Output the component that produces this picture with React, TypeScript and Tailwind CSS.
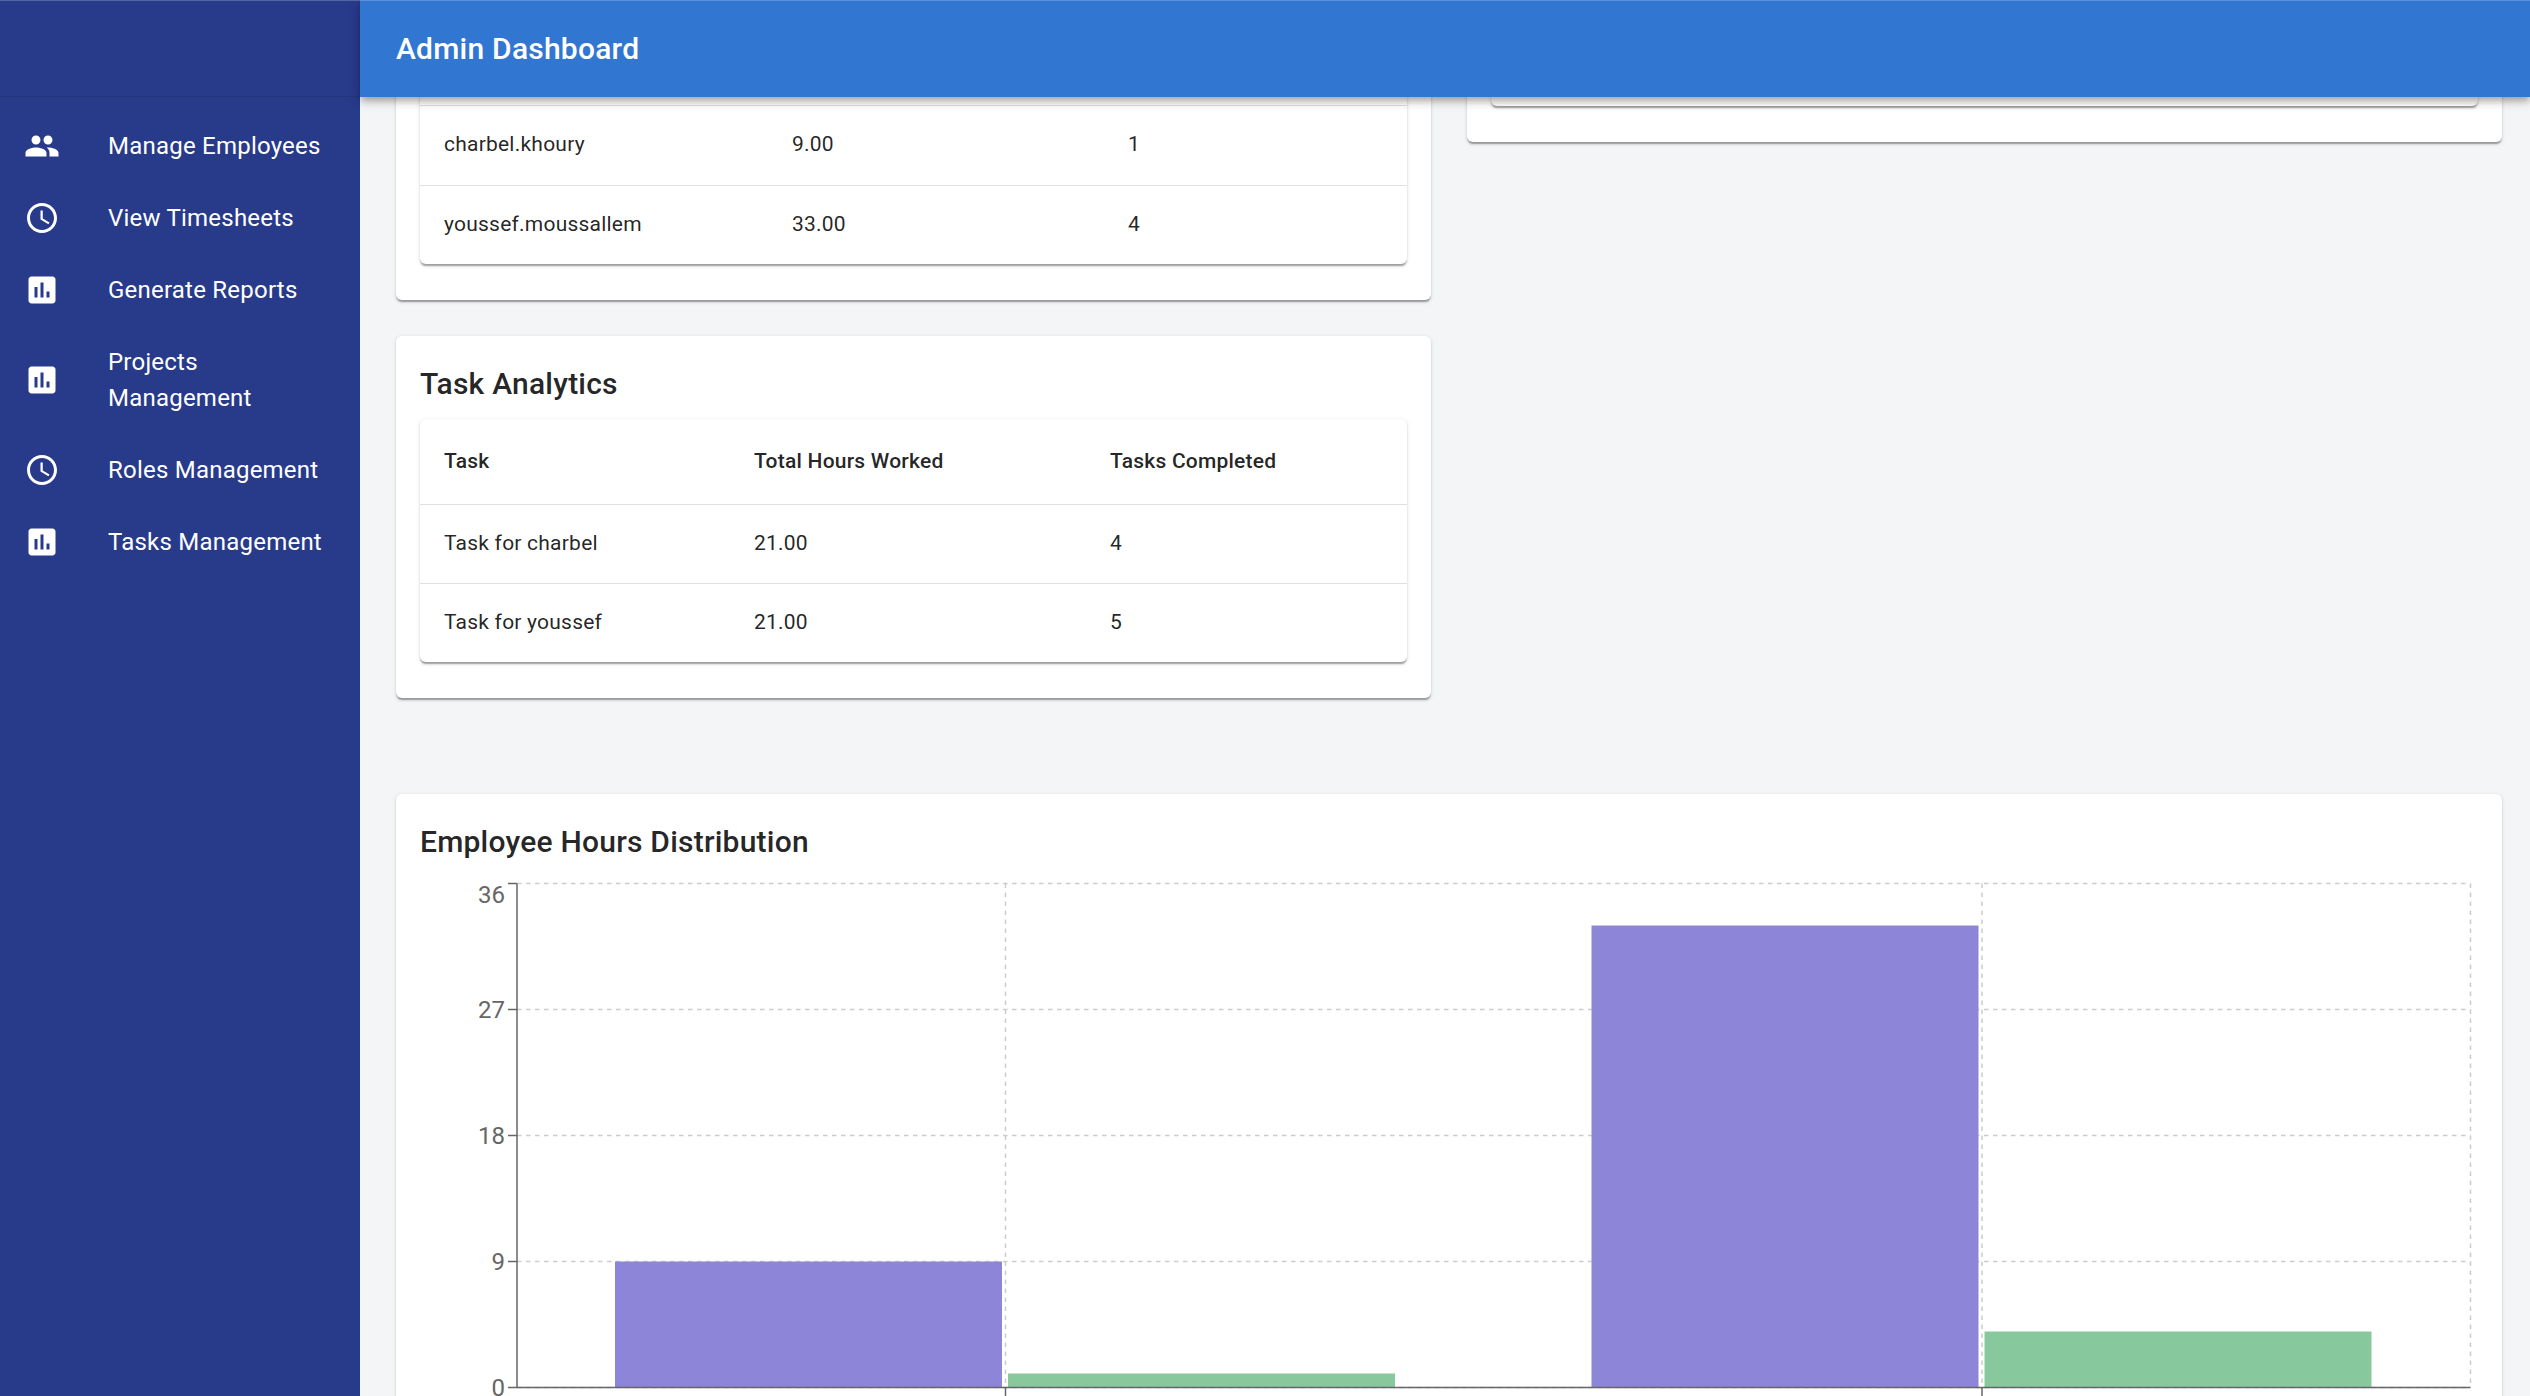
const PEOPLE =
  "M16 11c1.66 0 2.99-1.34 2.99-3S17.66 5 16 5c-1.66 0-3 1.34-3 3s1.34 3 3 3zm-8 0c1.66 0 2.99-1.34 2.99-3S9.66 5 8 5C6.34 5 5 6.34 5 8s1.34 3 3 3zm0 2c-2.33 0-7 1.17-7 3.5V19h14v-2.5c0-2.33-4.67-3.5-7-3.5zm8 0c-.29 0-.62.02-.97.05 1.16.84 1.97 1.97 1.97 3.45V19h6v-2.5c0-2.33-4.67-3.5-7-3.5z";
const CLOCK =
  "M11.99 2C6.47 2 2 6.48 2 12s4.47 10 9.99 10C17.52 22 22 17.52 22 12S17.52 2 11.99 2zM12 20c-4.42 0-8-3.58-8-8s3.58-8 8-8 8 3.58 8 8-3.58 8-8 8zm.5-13H11v6l5.25 3.15.75-1.23-4.5-2.67z";
const CHART =
  "M19 3H5c-1.1 0-2 .9-2 2v14c0 1.1.9 2 2 2h14c1.1 0 2-.9 2-2V5c0-1.1-.9-2-2-2zM9 17H7v-7h2v7zm4 0h-2V7h2v10zm4 0h-2v-4h2v4z";

const navItems = [
  { label: "Manage Employees", icon: PEOPLE },
  { label: "View Timesheets", icon: CLOCK },
  { label: "Generate Reports", icon: CHART },
  { label: "Projects Management", icon: CHART },
  { label: "Roles Management", icon: CLOCK },
  { label: "Tasks Management", icon: CHART },
];

const elevation =
  "shadow-[0_3px_1.5px_-1.5px_rgba(0,0,0,0.2),0_1.5px_1.5px_rgba(0,0,0,0.14),0_1.5px_4.5px_rgba(0,0,0,0.12)]";

const Row = ({ cells, last }: { cells: string[]; last?: boolean }) => (
  <tr className={last ? "h-[79px]" : "h-[79px] border-b border-[#e0e0e0]"}>
    {cells.map((c, i) => (
      <td key={i} className="px-[24px] pb-[2px] text-[21px] leading-[30px] tracking-[0.01071em] text-black/[0.87]">
        {c}
      </td>
    ))}
  </tr>
);

const Chart = () => {
  const yTicks = [
    { label: "36", y: 883.5, dy: 19 },
    { label: "27", y: 1009.5, dy: 8 },
    { label: "18", y: 1135.5, dy: 8 },
    { label: "9", y: 1261.5, dy: 8 },
    { label: "0", y: 1387.5, dy: 8 },
  ];
  const bars = [
    { x: 615, y: 1261.5, fill: "#8c85d8" },
    { x: 1008, y: 1373.5, fill: "#87c99d" },
    { x: 1591.5, y: 925.5, fill: "#8c85d8" },
    { x: 1984.5, y: 1331.5, fill: "#87c99d" },
  ];
  return (
    <svg viewBox="420 866 2058 540" className="block w-[2058px] h-[540px]">
      {yTicks.map((t) => (
        <line key={t.label} x1="517" x2="2470.5" y1={t.y} y2={t.y} stroke="#ccc" strokeWidth="1.5" strokeDasharray="4.5 4.5" />
      ))}
      {[1005.5, 1982, 2470.5].map((x) => (
        <line key={x} x1={x} x2={x} y1="883.5" y2="1387.5" stroke="#ccc" strokeWidth="1.5" strokeDasharray="4.5 4.5" />
      ))}
      {bars.map((b) => (
        <rect key={b.x} x={b.x} y={b.y} width="387" height={1387.5 - b.y} fill={b.fill} />
      ))}
      <line x1="517" x2="517" y1="883.5" y2="1387.5" stroke="#666" strokeWidth="1.5" />
      <line x1="517" x2="2470.5" y1="1387.5" y2="1387.5" stroke="#666" strokeWidth="1.5" />
      {yTicks.map((t) => (
        <g key={t.label}>
          <line x1="508" x2="517" y1={t.y} y2={t.y} stroke="#666" strokeWidth="1.5" />
          <text x="505" y={t.y + t.dy} textAnchor="end" fontSize="24" fill="#666">
            {t.label}
          </text>
        </g>
      ))}
      {[1005.5, 1982].map((x) => (
        <line key={x} x1={x} x2={x} y1="1387.5" y2="1397" stroke="#666" strokeWidth="1.5" />
      ))}
    </svg>
  );
};

export default function App() {
  return (
    <div className="flex h-screen w-screen overflow-hidden font-[Roboto,sans-serif]">
      <aside className="w-[360px] shrink-0 border-t border-[#5468a8] bg-[#283a8a] text-white">
        <div className="h-[96px] border-b border-black/10" />
        <nav className="pt-[13px]">
          {navItems.map((item) => (
            <div key={item.label} className="flex items-center px-[24px] py-[18px]">
              <div className="w-[84px] shrink-0">
                <svg viewBox="0 0 24 24" className="block w-[36px] h-[36px] fill-white">
                  <path d={item.icon} />
                </svg>
              </div>
              <span className="text-[24px] leading-[36px] tracking-[0.00938em]">{item.label}</span>
            </div>
          ))}
        </nav>
      </aside>

      <div className="flex min-w-0 flex-1 flex-col">
        <header className="relative z-10 flex h-[97px] shrink-0 items-center border-t border-[#5e92dc] bg-[#3176d1] px-[36px] text-white shadow-[0_3px_6px_-1.5px_rgba(0,0,0,0.2),0_6px_7.5px_rgba(0,0,0,0.14),0_1.5px_15px_rgba(0,0,0,0.12)]">
          <h1 className="text-[30px] leading-[48px] font-medium tracking-[0.0075em]">Admin Dashboard</h1>
        </header>

        <main className="flex-1 overflow-hidden bg-[#f4f5f7]">
          <div className="-mt-[40px] w-[2106px] ml-[36px]">
            <div className="grid grid-cols-2 items-start gap-[36px]">
              <div className="flex flex-col gap-[36px]">
                <section className={`rounded-[6px] bg-white px-[24px] pt-[24px] pb-[36px] ${elevation}`}>
                  <div className={`rounded-[6px] bg-white ${elevation}`}>
                    <div className="h-[25px] border-b border-[#e0e0e0]" />
                    <table className="w-full table-fixed">
                      <colgroup>
                        <col className="w-[348px]" />
                        <col className="w-[336px]" />
                        <col className="w-[303px]" />
                      </colgroup>
                      <tbody>
                        <Row cells={["charbel.khoury", "9.00", "1"]} />
                        <Row cells={["youssef.moussallem", "33.00", "4"]} last />
                      </tbody>
                    </table>
                  </div>
                </section>

                <section className={`rounded-[6px] bg-white px-[24px] pt-[24px] pb-[36px] ${elevation}`}>
                  <h2 className="mb-[11px] text-[30px] leading-[48px] font-medium tracking-[0.0075em] text-black/[0.87]">
                    Task Analytics
                  </h2>
                  <div className={`rounded-[6px] bg-white ${elevation}`}>
                    <table className="w-full table-fixed">
                      <colgroup>
                        <col className="w-[310px]" />
                        <col className="w-[356px]" />
                        <col className="w-[321px]" />
                      </colgroup>
                      <thead>
                        <tr className="h-[85px] border-b border-[#e0e0e0] text-left">
                          {["Task", "Total Hours Worked", "Tasks Completed"].map((h) => (
                            <th key={h} className="px-[24px] text-[21px] leading-[36px] font-medium tracking-[0.01071em] text-black/[0.87]">
                              {h}
                            </th>
                          ))}
                        </tr>
                      </thead>
                      <tbody>
                        <Row cells={["Task for charbel", "21.00", "4"]} />
                        <Row cells={["Task for youssef", "21.00", "5"]} last />
                      </tbody>
                    </table>
                  </div>
                </section>
              </div>

              <section className={`rounded-[6px] bg-white px-[24px] pt-[24px] pb-[36px] ${elevation}`}>
                <div className={`h-[25px] rounded-[6px] bg-white ${elevation}`} />
              </section>
            </div>

            <section className={`mt-[96px] rounded-[6px] bg-white px-[24px] pt-[24px] ${elevation}`}>
              <h2 className="text-[30px] leading-[48px] font-medium tracking-[0.0075em] text-black/[0.87]">
                Employee Hours Distribution
              </h2>
              <Chart />
            </section>
          </div>
        </main>
      </div>
    </div>
  );
}
